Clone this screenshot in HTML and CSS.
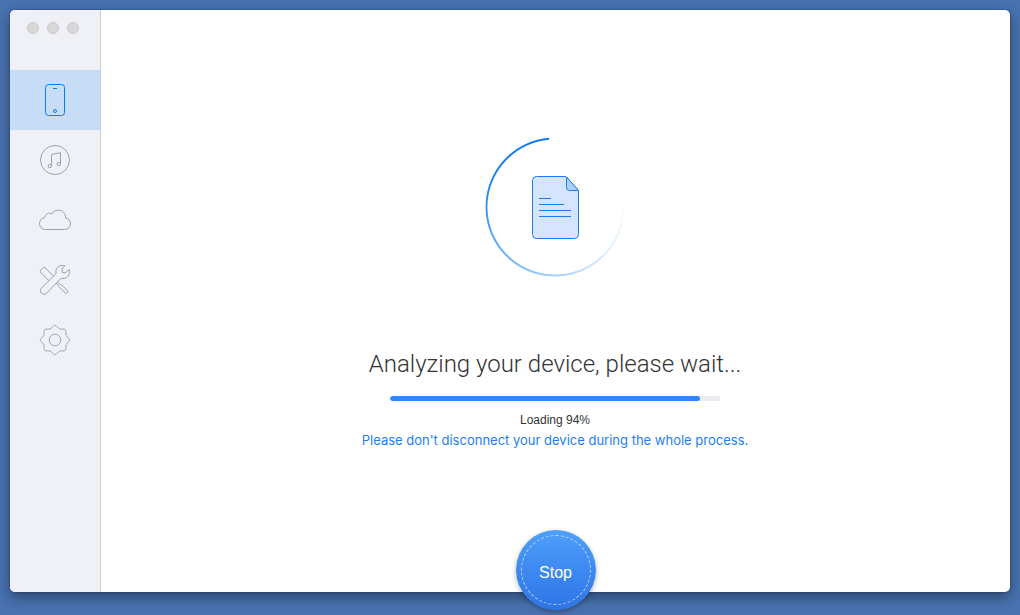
FILE: index.html
```html
<!DOCTYPE html>
<html lang="en">
<head>
    <meta charset="UTF-8">
    <meta name="viewport" content="width=device-width, initial-scale=1.0">
    <title>Device Manager</title>
    <link rel="stylesheet" href="styles.css">
</head>
<body>
    <div class="window">
        <aside class="sidebar">
            <div class="window-controls">
                <button type="button" aria-label="Close"></button>
                <button type="button" aria-label="Minimize"></button>
                <button type="button" aria-label="Zoom"></button>
            </div>
            <nav class="nav">
                <a href="#device" class="nav-item active" aria-label="Device">
                    <svg viewBox="0 0 32 32">
                        <rect x="6.5" y=".5" width="19" height="31" rx="3"/>
                        <path d="M14 4.5h4"/>
                        <circle cx="16" cy="27" r="1.5"/>
                    </svg>
                </a>
                <a href="#music" class="nav-item" aria-label="Music">
                    <svg viewBox="0 0 32 32">
                        <circle cx="16" cy="16" r="14.5"/>
                        <path d="M12.5 22V10.5L21.5 8.7V20"/>
                        <circle cx="10.8" cy="22" r="1.7"/>
                        <circle cx="19.8" cy="20" r="1.7"/>
                    </svg>
                </a>
                <a href="#cloud" class="nav-item" aria-label="Cloud">
                    <svg viewBox="0 0 32 32">
                        <path d="M6.5 25.5H25.5C29 25.5 31.5 23 31.5 20C31.5 17 29.5 14.5 26.5 14C27 9.4 23.5 6.2 19.5 6.2C16.5 6.2 14 7.5 12.8 10C10 8.4 6.5 9.8 5.8 13.5C2.5 14 .5 16.5 .5 19.5C.5 23 3 25.5 6.5 25.5Z"/>
                    </svg>
                </a>
                <a href="#tools" class="nav-item" aria-label="Tools">
                    <svg viewBox="0 0 32 32">
                        <path d="M14.3 12L6.8 4.2C5.8 3.2 4.6 3.2 3.6 4.2L2 5.8C1 6.8 1 7.8 2 8.8L9.8 16.5"/>
                        <path d="M18.4 18L20.6 20.2C22.4 20.4 23.4 21.6 24.6 22.8L28 26.2C29.8 28.2 28 30.4 26 28.6L22.2 25C21 23.8 19.8 22.8 19.4 21.4L17.2 19.2"/>
                        <path d="M25.8 1.7C20.6 .4 15.8 4 17 9.6L2.3 24.3C-.6 27.6 3.8 32.2 7.4 29.3L22 14.4C27.4 15.6 31.8 11 30.2 5.6L26.4 8.8L23.4 8.4L22.8 5.4Z"/>
                    </svg>
                </a>
                <a href="#settings" class="nav-item" aria-label="Settings">
                    <svg viewBox="-1 -1 34 34">
                        <path d="M18.2 1.9Q20.4 5.2 24.2 4.5Q28.2 3.8 27.5 7.8Q26.8 11.6 30.1 13.8Q33.4 16 30.1 18.2Q26.8 20.4 27.5 24.2Q28.2 28.2 24.2 27.5Q20.4 26.8 18.2 30.1Q16 33.4 13.8 30.1Q11.6 26.8 7.8 27.5Q3.8 28.2 4.5 24.2Q5.2 20.4 1.9 18.2Q-1.4 16 1.9 13.8Q5.2 11.6 4.5 7.8Q3.8 3.8 7.8 4.5Q11.6 5.2 13.8 1.9Q16 -1.4 18.2 1.9Z"/>
                        <circle cx="16" cy="16" r="6.2"/>
                    </svg>
                </a>
            </nav>
        </aside>

        <main class="content">
            <div class="spinner">
                <svg class="document" viewBox="0 0 48 64">
                    <path class="page" d="M5.5 1.5H35L47.5 15.5V59.5Q47.5 63.5 43.5 63.5H5.5Q1.5 63.5 1.5 59.5V5.5Q1.5 1.5 5.5 1.5Z"/>
                    <path class="fold" d="M35.5 2V12.5Q35.5 15.5 38.5 15.5H47.5Z"/>
                    <path d="M8 23.5H20M8 29.5H33M8 35.5H40M8 41.5H40"/>
                </svg>
            </div>
            <h1>Analyzing your device, please wait...</h1>
            <progress id="loading" value="94" max="100"></progress>
            <label for="loading">Loading 94%</label>
            <p class="notice">Please don't disconnect your device during the whole process.</p>
            <button type="button" class="stop">Stop</button>
        </main>
    </div>
</body>
</html>
```

FILE: styles.css
```css
* {
    box-sizing: border-box;
}

body {
    margin: 0;
    min-height: 100vh;
    padding: 10px 10px 23px;
    display: flex;
    background-color: #4872b0;
    font-family: "Liberation Sans", Arial, sans-serif;
    color: #333;
}

.window {
    flex: 1;
    display: flex;
    background-color: #fff;
    border-radius: 5px;
    box-shadow: 0 5px 14px rgba(0, 0, 0, 0.4), 0 0 2px rgba(0, 0, 0, 0.4);
}

.sidebar {
    flex: 0 0 91px;
    background-color: #f0f1f6;
    border-right: 1px solid #cbcccd;
    border-radius: 5px 0 0 5px;
}

.window-controls {
    display: flex;
    gap: 8px;
    height: 60px;
    padding: 12px 17px;
}

.window-controls button {
    width: 12px;
    height: 12px;
    padding: 0;
    border: 1px solid #c8c8c8;
    border-radius: 50%;
    background-color: #d8d8d8;
}

.nav-item {
    display: flex;
    align-items: center;
    justify-content: center;
    height: 60px;
    color: #9ba1a7;
}

.nav-item.active {
    background-color: #c7ddf5;
    color: #0b7af5;
}

.nav-item svg {
    width: 32px;
    height: 32px;
    fill: none;
    stroke: currentColor;
    stroke-linejoin: round;
}

.content {
    position: relative;
    flex: 1;
    display: flex;
    flex-direction: column;
    align-items: center;
    padding: 127px 1px 0 0;
}

.spinner {
    position: relative;
    display: flex;
    align-items: center;
    justify-content: center;
    width: 140px;
    height: 140px;
}

/* fading ring, brightest at the top */
.spinner::before {
    content: "";
    position: absolute;
    inset: 0;
    border-radius: 50%;
    background: conic-gradient(transparent 85deg, #e1f1fe 125deg, #a2d0fb 180deg, #59a9f8 240deg, #1c80ee 300deg, #0a78f2 355deg, transparent 355deg);
    mask: radial-gradient(closest-side, transparent 67px, #000 68px, #000 69px, transparent 70px);
}

.document {
    width: 48px;
    height: 64px;
    fill: none;
    stroke: #1a7cf2;
}

.document .page {
    fill: #d4e5fd;
}

.document .fold {
    fill: #aed0fb;
    stroke-linejoin: round;
}

h1 {
    margin: 71px 0 0;
    font-family: Roboto, "Helvetica Neue", sans-serif;
    font-size: 24px;
    font-weight: 300;
    line-height: 32px;
}

progress {
    appearance: none;
    width: 330px;
    height: 5px;
    margin-top: 16px;
    border: none;
    border-radius: 3px;
    overflow: hidden;
}

progress::-webkit-progress-bar {
    background-color: #ebebf0;
}

progress::-webkit-progress-value {
    background-color: #2d88ff;
    border-radius: 3px;
}

label {
    margin-top: 10px;
    font-size: 12px;
    line-height: 18px;
}

.notice {
    margin: 1px 0 0;
    font-family: Inter, sans-serif;
    font-size: 13px;
    line-height: 20px;
    color: #1a80f0;
}

/* hangs over the bottom edge of the window */
.stop {
    position: absolute;
    bottom: -18px;
    left: 50%;
    margin-left: -40px;
    width: 80px;
    height: 80px;
    padding: 5px 0 0;
    border: none;
    border-radius: 50%;
    background: linear-gradient(#4e9ffb, #2e74e6);
    box-shadow: 0 2px 5px rgba(0, 0, 0, 0.3);
    color: #fff;
    font-family: inherit;
    font-size: 16px;
    cursor: pointer;
}

.stop::before {
    content: "";
    position: absolute;
    inset: 5px;
    border: 1px dashed rgba(255, 255, 255, 0.65);
    border-radius: 50%;
}
```
